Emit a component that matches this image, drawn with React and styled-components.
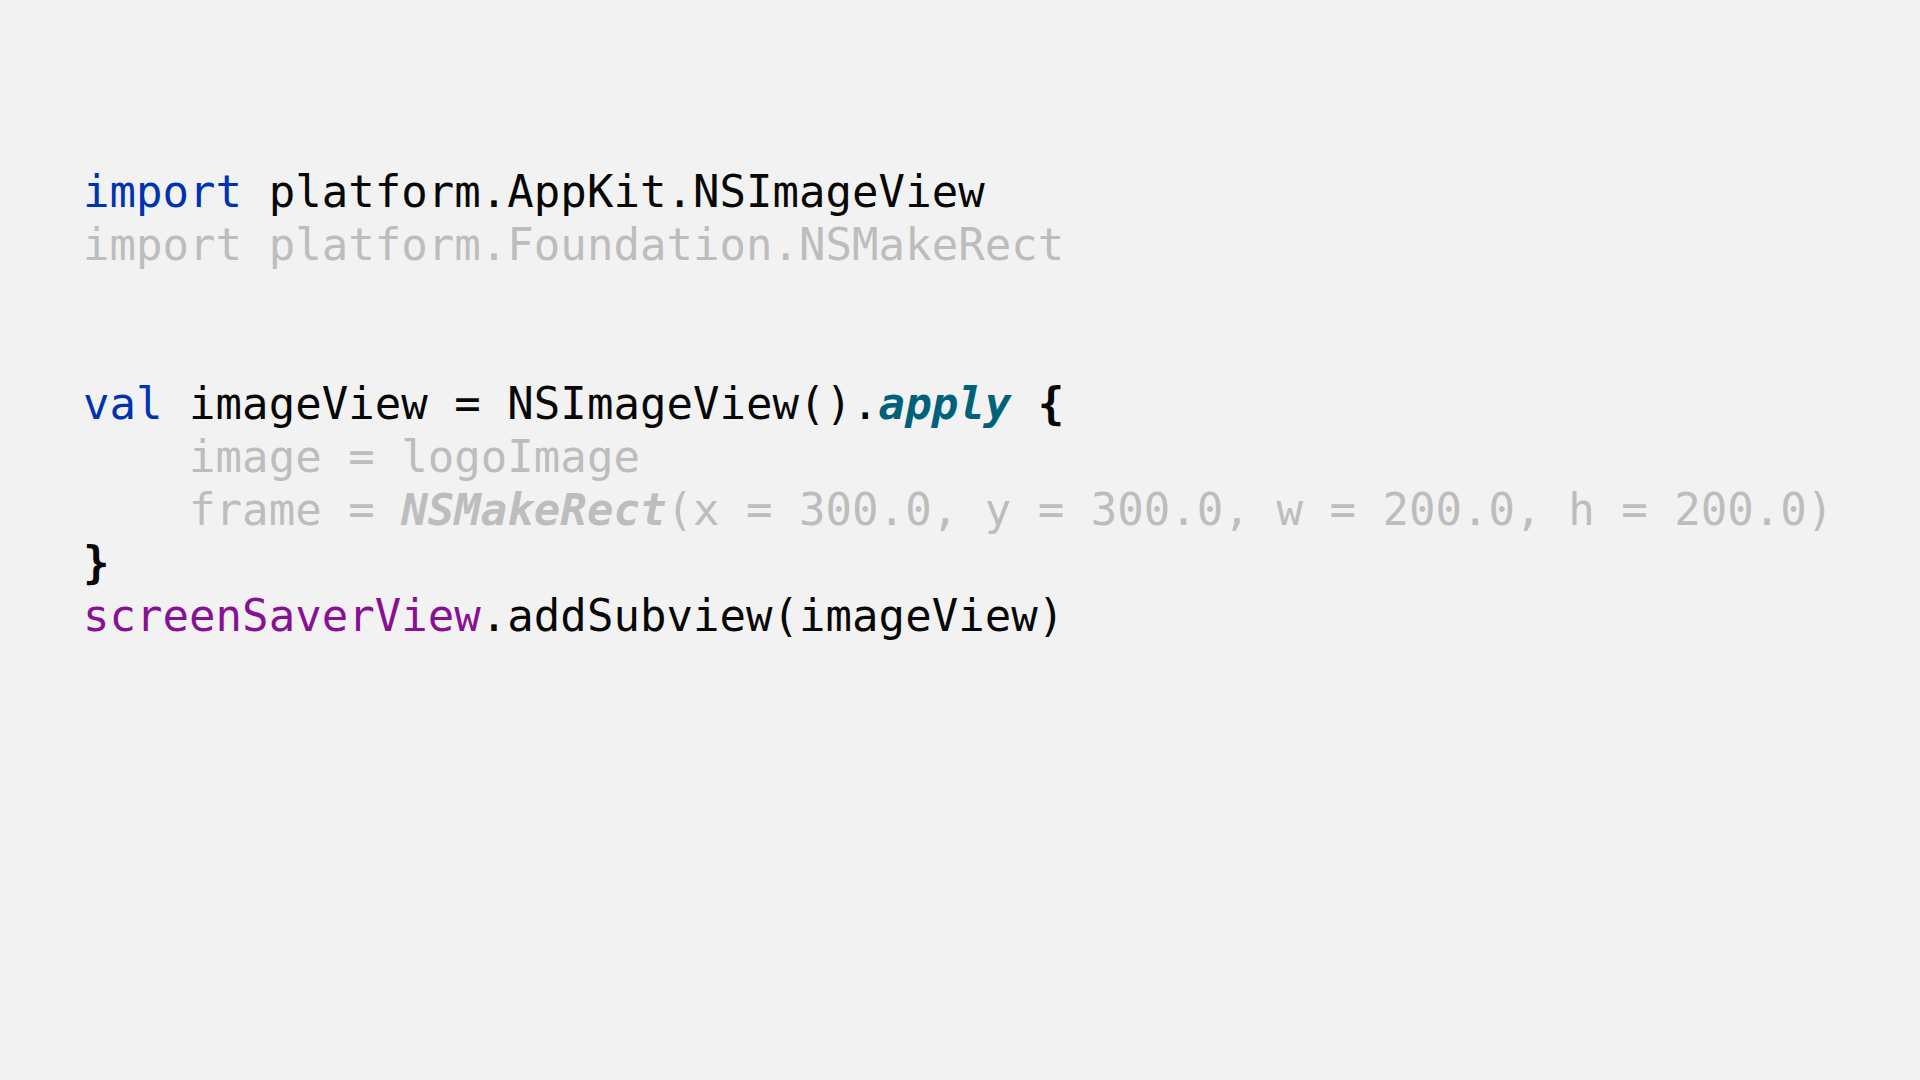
import React from "react";
import styled, { createGlobalStyle } from "styled-components";

const GlobalStyle = createGlobalStyle`
  html, body {
    margin: 0;
    padding: 0;
    background: #f2f2f2;
  }
`;

const Slide = styled.main`
  width: 1920px;
  height: 1080px;
  box-sizing: border-box;
  padding: 165px 0 0 83px;
  background: #f2f2f2;
`;

const Code = styled.pre`
  margin: 0;
  font-family: "DejaVu Sans Mono", "Liberation Mono", monospace;
  font-size: 44px;
  line-height: 53px;
  letter-spacing: 0.03px;
  color: #080808;
  white-space: pre;
`;

const Line = styled.div`
  height: 53px;
  color: ${(p) => (p.dim ? "#bdbdbd" : "#080808")};
`;

const Keyword = styled.span`
  color: ${(p) => (p.dim ? "#bdbdbd" : "#0033b3")};
`;

const Member = styled.span`
  color: #871094;
`;

const Call = styled.span`
  font-style: italic;
  font-weight: bold;
  color: ${(p) => (p.dim ? "#bdbdbd" : "#00627a")};
`;

const Brace = styled.span`
  font-weight: bold;
  color: #080808;
`;

export default function App() {
  return (
    <>
      <GlobalStyle />
      <Slide>
        <Code>
          <Line>
            <Keyword>import</Keyword> platform.AppKit.NSImageView
          </Line>
          <Line dim>
            <Keyword dim>import</Keyword> platform.Foundation.NSMakeRect
          </Line>
          <Line />
          <Line />
          <Line>
            <Keyword>val</Keyword> imageView = NSImageView().<Call>apply</Call> <Brace>{"{"}</Brace>
          </Line>
          <Line dim>{"    image = logoImage"}</Line>
          <Line dim>
            {"    frame = "}
            <Call dim>NSMakeRect</Call>
            {"(x = 300.0, y = 300.0, w = 200.0, h = 200.0)"}
          </Line>
          <Line>
            <Brace>{"}"}</Brace>
          </Line>
          <Line>
            <Member>screenSaverView</Member>.addSubview(imageView)
          </Line>
        </Code>
      </Slide>
    </>
  );
}
